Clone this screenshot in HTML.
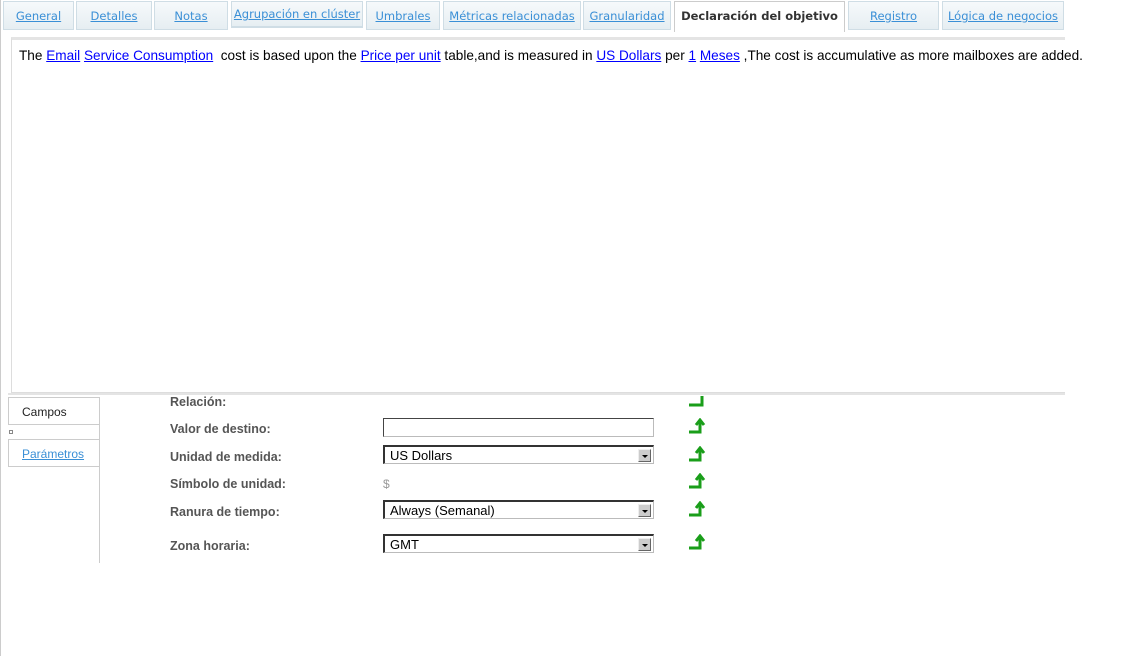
<!DOCTYPE html>
<html><head><meta charset="utf-8"><style>
*{box-sizing:border-box;margin:0;padding:0}
body{width:1125px;height:656px;background:#fff;font-family:"DejaVu Sans","Liberation Sans",sans-serif;position:relative;overflow:hidden}
.lb{position:absolute;left:0;top:0;width:1px;height:656px;background:#ccc}
.tab{position:absolute;top:1px;height:29px;border:1px solid #cfdde5;background:linear-gradient(#f6f9fb,#e6eef2);font-size:11.5px;color:#3a8fd6;text-decoration:underline;text-align:center;line-height:28px;white-space:nowrap}
.tab.act{background:#fff;color:#333;font-weight:bold;text-decoration:none;height:31px;border-bottom:none;border-color:#ccc}
.box{position:absolute;left:11px;top:37px;width:1054px;height:356px;border:1px solid #ddd;border-right:none;border-top:3px solid #e4e4e4}
.txt{position:absolute;left:19px;top:48px;font-family:"Liberation Sans",sans-serif;font-size:13.6px;color:#000;white-space:nowrap}
.txt a{color:#00f;text-decoration:underline}
.lab{position:absolute;left:170px;font-family:"Liberation Sans",sans-serif;font-weight:bold;font-size:12.5px;color:#555}
.inp{position:absolute;left:383px;width:271px;height:19px;border:1px solid #888;border-top-color:#444;border-left-color:#444;border-bottom-color:#bbb;border-right-color:#bbb;background:#fff;font-family:"Liberation Sans",sans-serif;font-size:13px;padding-left:5px;line-height:17px}
.sel{border:2px solid #333;border-right-color:#bbb;border-bottom-color:#bbb;border-width:2px 1px 1px 2px}
.dd{position:absolute;right:2px;top:2px;width:13px;height:13px;background:#ccc;border:1px solid #666;border-top-color:#eee;border-left-color:#eee}
.dd:after{content:"";position:absolute;left:3px;top:5px;border:3px solid transparent;border-top:3px solid #000}
.arr{position:absolute;left:688px}
</style></head><body>
<div class="lb"></div>
<div class="tab" style="left:3px;width:71px">General</div>
<div class="tab" style="left:76px;width:76px">Detalles</div>
<div class="tab" style="left:154px;width:74px">Notas</div>
<div class="tab" style="left:231px;width:132px;height:27px;line-height:25px;border-bottom:2px solid #cfdde5">Agrupación en clúster</div>
<div class="tab" style="left:366px;width:74px">Umbrales</div>
<div class="tab" style="left:443px;width:138px">Métricas relacionadas</div>
<div class="tab" style="left:583px;width:88px">Granularidad</div>
<div class="tab act" style="left:674px;width:171px">Declaración del objetivo</div>
<div class="tab" style="left:848px;width:91px">Registro</div>
<div class="tab" style="left:942px;width:122px">Lógica de negocios</div>
<div class="box"></div>
<div class="txt">The <a>Email</a> <a>Service Consumption</a>&nbsp; cost is based upon the <a>Price per unit</a> table,and is measured in <a>US Dollars</a> per <a>1</a> <a>Meses</a> ,The cost is accumulative as more mailboxes are added.</div>
<div style="position:absolute;left:8px;top:393px;width:1057px;height:2px;background:#e4e4e4"></div>
<div style="position:absolute;left:8px;top:397px;width:92px;height:28px;border:1px solid #ccc;border-right:none;font-family:'Liberation Sans',sans-serif;font-size:12px;color:#222;padding:7px 0 0 13px">Campos</div>
<div style="position:absolute;left:9px;top:430px;width:4px;height:4px;border:1px solid #888"></div>
<div style="position:absolute;left:8px;top:439px;width:92px;height:28px;border:1px solid #ccc;font-family:'Liberation Sans',sans-serif;font-size:12px;color:#3a8fd6;text-decoration:underline;padding:7px 0 0 13px">Parámetros</div>
<div style="position:absolute;left:99px;top:397px;width:1px;height:166px;background:#ccc"></div>
<div class="lab" style="top:395px">Relación:</div>
<div class="lab" style="top:422px">Valor de destino:</div>
<div class="lab" style="top:450px">Unidad de medida:</div>
<div class="lab" style="top:477px">Símbolo de unidad:</div>
<div class="lab" style="top:505px">Ranura de tiempo:</div>
<div class="lab" style="top:539px">Zona horaria:</div>
<div class="inp" style="top:418px"></div>
<div class="inp sel" style="top:445px">US Dollars<div class="dd"></div></div>
<div style="position:absolute;left:383px;top:477px;font-family:'Liberation Sans',sans-serif;font-size:12px;color:#999">$</div>
<div class="inp sel" style="top:500px">Always (Semanal)<div class="dd"></div></div>
<div class="inp sel" style="top:534px">GMT<div class="dd"></div></div>
<svg class="arr" style="top:395px" width="18" height="13"><path d="M1 10H14V1" fill="none" stroke="#1a9e1a" stroke-width="3"/></svg>
<svg class="arr" style="top:418px" width="18" height="18"><path d="M1 14H12V3M8 7L12 2L16 7" fill="none" stroke="#1a9e1a" stroke-width="3"/></svg>
<svg class="arr" style="top:446px" width="18" height="18"><path d="M1 14H12V3M8 7L12 2L16 7" fill="none" stroke="#1a9e1a" stroke-width="3"/></svg>
<svg class="arr" style="top:473px" width="18" height="18"><path d="M1 14H12V3M8 7L12 2L16 7" fill="none" stroke="#1a9e1a" stroke-width="3"/></svg>
<svg class="arr" style="top:501px" width="18" height="18"><path d="M1 14H12V3M8 7L12 2L16 7" fill="none" stroke="#1a9e1a" stroke-width="3"/></svg>
<svg class="arr" style="top:534px" width="18" height="18"><path d="M1 14H12V3M8 7L12 2L16 7" fill="none" stroke="#1a9e1a" stroke-width="3"/></svg>
</body></html>
